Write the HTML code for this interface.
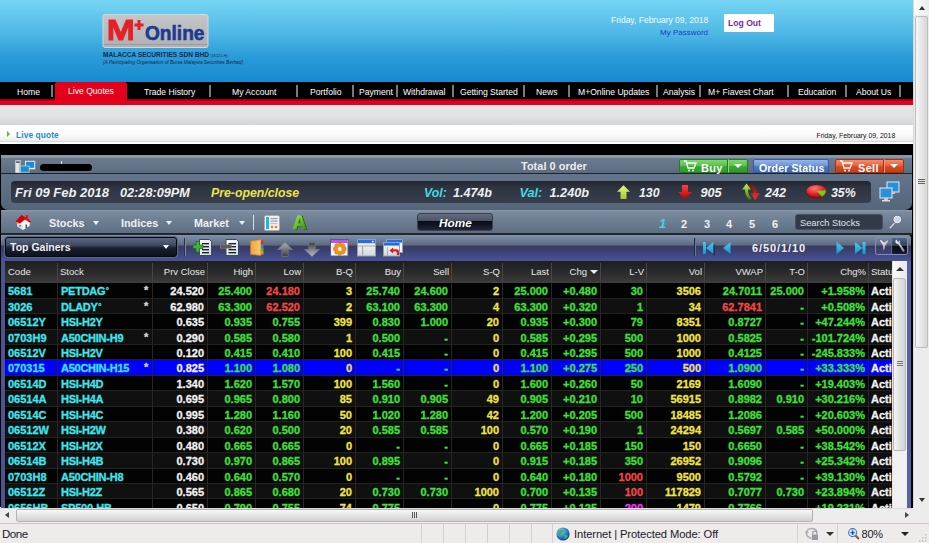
<!DOCTYPE html>
<html><head><meta charset="utf-8">
<style>
*{margin:0;padding:0;box-sizing:border-box}
html,body{width:929px;height:543px;overflow:hidden;background:#fff;font-family:"Liberation Sans",sans-serif}
.a{position:absolute}
.nw{white-space:nowrap}
#hdr{left:0;top:0;width:913px;height:82px;background:linear-gradient(#76d5f3 0%,#4fb8e6 40%,#2a9ad8 70%,#178bcf 100%)}
#nav{left:0;top:82px;width:913px;height:18px;background:#000}
#redline{left:0;top:99px;width:913px;height:6px;background:linear-gradient(#8a0014 0,#c00018 30%,#e8001e 40%,#e4001c 100%)}
.navt{top:82px;height:17px;line-height:20px;color:#fff;font-size:8.6px;white-space:nowrap}
.nsep{top:85px;width:2px;height:12px;background:#7a7a7a}
#grey{left:0;top:105px;width:913px;height:20px;background:linear-gradient(#e8f0f0 0,#e4e5e7 8%,#e2e3e5 50%,#d6d6d8 100%)}
#white{left:0;top:125px;width:913px;height:19px;background:linear-gradient(#fff 0,#fbfbfb 50%,#eeeeee 82%,#d4d4d4 84%,#d8d8d8 89%,#fff 92%,#fff 100%)}
.hd{top:261px;height:21px;line-height:22px;font-size:9.5px;color:#e8e8e8;white-space:nowrap}
.td{height:15px;line-height:16px;font-size:11px;font-weight:bold;white-space:nowrap;-webkit-text-stroke:0.3px currentColor}
.ib{top:185px;font-size:13px;font-weight:bold;font-style:italic;color:#f0f0f0;line-height:16px}
.tb{top:216px;font-size:10.8px;font-weight:bold;color:#eef0f4;line-height:15px}
.tri{top:221px;border-left:3.5px solid transparent;border-right:3.5px solid transparent;border-top:4px solid #eef0f4}
.pg{top:215.5px;font-size:11px;font-weight:bold;color:#f0f0f0;line-height:16px}
.sep2{top:524px;width:1px;height:19px;background:#d4d0d0}
#blk{left:0;top:144px;width:913px;height:363px;background:#000}
</style></head><body>
<div id="hdr" class="a"></div>
<!-- logo -->
<svg class="a" style="left:95px;top:8px" width="160" height="64" viewBox="0 0 160 64">
<defs><linearGradient id="lg" x1="0" y1="0" x2="0" y2="1"><stop offset="0" stop-color="#c4c6c9"/><stop offset="1" stop-color="#aeb0b3"/></linearGradient></defs>
<rect x="8" y="6.5" width="105" height="33" rx="2" fill="url(#lg)" stroke="#d4d6d8" stroke-width="1"/>
<path d="M8.5 36.5H112.5" stroke="#9a9c9f" stroke-width="1"/>
<path d="M13.5 11.5H20.5L25.8 24L31 11.5H38V32.5H33.2V19.5L28 32.5H23.5L18.3 19.5V32.5H13.5Z" fill="#e42128"/>
<path d="M39.5 15.5H42.5V12H45.5V15.5H48.5V18.5H45.5V22H42.5V18.5H39.5Z" fill="#e42128"/>
<text x="50" y="31.8" font-family="Liberation Sans" font-weight="bold" font-size="20.5" fill="#1d3a8f" textLength="59.5" lengthAdjust="spacingAndGlyphs" stroke="#1d3a8f" stroke-width="0.6">Online</text>
<text x="8" y="49" font-family="Liberation Sans" font-weight="bold" font-size="7.6" fill="#14284a" textLength="106" lengthAdjust="spacingAndGlyphs">MALACCA SECURITIES SDN BHD</text>
<text x="115.5" y="48.5" font-family="Liberation Sans" font-size="3.6" fill="#14284a" textLength="17" lengthAdjust="spacingAndGlyphs">(16121-H)</text>
<text x="8" y="56" font-family="Liberation Sans" font-style="italic" font-size="6" fill="#14284a" textLength="140" lengthAdjust="spacingAndGlyphs">(A Participating Organisation of Bursa Malaysia Securities Berhad)</text>
</svg>
<!-- header right -->
<div class="a nw" style="left:611px;top:15px;font-size:8.5px;color:#f4f8fc;line-height:10px">Friday, February 09, 2018</div>
<div class="a nw" style="left:660px;top:28px;font-size:8px;color:#1a3fc0;line-height:10px">My Password</div>
<div class="a" style="left:724px;top:14px;width:50px;height:18px;background:#fff"></div>
<div class="a nw" style="left:728px;top:17px;font-size:8.6px;font-weight:bold;color:#7b1fa2;line-height:12px">Log Out</div>

<div id="nav" class="a"></div>
<div id="redline" class="a"></div>
<div class="a" style="left:55px;top:82px;width:72px;height:19px;background:#e2001a;border-radius:2px 2px 0 0"></div>
<div class="a navt" style="left:17px">Home</div>
<div class="a nsep" style="left:51px"></div>
<div class="a navt" style="left:68px;top:81px">Live Quotes</div>
<div class="a navt" style="left:144px">Trade History</div>
<div class="a nsep" style="left:209px"></div>
<div class="a navt" style="left:232px">My Account</div>
<div class="a nsep" style="left:296px"></div>
<div class="a navt" style="left:310px">Portfolio</div>
<div class="a nsep" style="left:352px"></div>
<div class="a navt" style="left:359px">Payment</div>
<div class="a nsep" style="left:396px"></div>
<div class="a navt" style="left:403px">Withdrawal</div>
<div class="a nsep" style="left:452px"></div>
<div class="a navt" style="left:460px">Getting Started</div>
<div class="a nsep" style="left:523px"></div>
<div class="a navt" style="left:536px">News</div>
<div class="a nsep" style="left:568px"></div>
<div class="a navt" style="left:578px">M+Online Updates</div>
<div class="a nsep" style="left:656px"></div>
<div class="a navt" style="left:663px">Analysis</div>
<div class="a nsep" style="left:699px"></div>
<div class="a navt" style="left:708px">M+ Fiavest Chart</div>
<div class="a nsep" style="left:787px"></div>
<div class="a navt" style="left:798px">Education</div>
<div class="a nsep" style="left:845px"></div>
<div class="a navt" style="left:856px">About Us</div>
<div class="a nsep" style="left:899px"></div>

<div id="grey" class="a"></div>
<div id="white" class="a"></div>
<div class="a" style="left:7px;top:131px;width:0;height:0;border-left:3.5px solid #5cb82c;border-top:3px solid transparent;border-bottom:3px solid transparent"></div>
<div class="a nw" style="left:16px;top:130px;font-size:8.4px;font-weight:bold;color:#2a8ac8;line-height:10px;letter-spacing:0.1px">Live quote</div>
<div class="a nw" style="left:816.5px;top:131px;font-size:6.9px;color:#111;line-height:10px">Friday, February 09, 2018</div>

<div id="blk" class="a"></div>
<!-- APP -->
<div id="app"></div>
<!-- panel -->
<div class="a" style="left:1px;top:155px;width:911px;height:18px;background:linear-gradient(#8a9aae 0,#8696aa 15%,#6c7a8e 18%,#66758a 50%,#5c6b80 100%)"></div>
<div class="a" style="left:1px;top:173px;width:911px;height:1px;background:#1e242c"></div>
<div class="a" style="left:1px;top:174px;width:911px;height:36px;background:linear-gradient(#64748a,#55657a);border-radius:0 0 7px 7px"></div>
<div class="a" style="left:11px;top:181px;width:860px;height:22px;background:linear-gradient(#20252f 0,#2e3440 30%,#383f4d 100%);border-radius:4px"></div>
<div class="a" style="left:1px;top:210px;width:911px;height:24px;background:linear-gradient(#8a99ab 0,#7a8a9d 10%,#6a7a8e 60%,#5d6c80 100%)"></div>
<div class="a" style="left:1px;top:233px;width:911px;height:2px;background:#23262c"></div>
<div class="a" style="left:1px;top:235px;width:910px;height:26px;background:linear-gradient(#7e92aa 0,#6e7e96 20%,#5c687c 40%,#383a5e 41%,#3c4070 60%,#46549a 100%);border-radius:0 3px 0 0"></div>
<!-- table area -->
<div class="a" style="left:1px;top:261px;width:911px;height:247px;background:#4a5590"></div>
<div class="a" style="left:5px;top:261px;width:887px;height:247px;background:#000"></div>
<div class="a" style="left:907px;top:261px;width:4px;height:247px;background:#5262a4"></div>
<div class="a" style="left:911px;top:235px;width:2px;height:273px;background:#000"></div>


<!--PANEL-->
<!-- row A content -->
<svg class="a" style="left:15px;top:160px" width="21" height="13" viewBox="0 0 21 13"><rect x="0.3" y="0.3" width="5.5" height="12.5" fill="#e4e4e4"/><rect x="4" y="0.3" width="2" height="12.5" fill="#b8b8b8"/><rect x="1" y="1.5" width="3.5" height="1.2" fill="#333"/><rect x="10" y="0.8" width="10.2" height="8.5" fill="#e8f0f4"/><rect x="11" y="1.8" width="8.2" height="6" fill="#1f8ad4"/><rect x="5" y="5.6" width="9.5" height="7" fill="#a8d8f0"/><rect x="5.8" y="6.4" width="8" height="5.4" fill="#1f8ad4"/></svg>


<div class="a" style="left:40px;top:164px;width:52px;height:7px;background:#000;border-radius:3.5px"></div>
<div class="a" style="left:61px;top:161px;width:1px;height:3px;background:#e8e8e8"></div>
<div class="a nw" style="left:521px;top:159px;font-size:11px;font-weight:bold;color:#ececec;line-height:14px">Total 0 order</div>
<!-- buy -->
<div class="a" style="left:679px;top:159px;width:49px;height:14px;background:linear-gradient(#7cd86c 0,#5cc450 45%,#3aa832 55%,#2e9a28 100%);border:1px solid #2a7a22;border-radius:2px 0 0 0"></div>
<div class="a" style="left:728px;top:159px;width:20px;height:14px;background:linear-gradient(#7cd86c 0,#5cc450 45%,#3aa832 55%,#2e9a28 100%);border:1px solid #2a7a22;border-left:1px solid #8ad87a;border-radius:0 2px 0 0"></div>
<div class="a nw" style="left:701px;top:160px;font-size:11px;font-weight:bold;color:#fff;line-height:16px;letter-spacing:0.3px">Buy</div>
<div class="a" style="left:734px;top:164px;border-left:4px solid transparent;border-right:4px solid transparent;border-top:4px solid #fff"></div>
<!-- order status -->
<div class="a" style="left:753px;top:159px;width:76px;height:14px;background:linear-gradient(#94b4ea 0,#7096d8 45%,#5078c4 55%,#3e66b2 100%);border:1px solid #3a5aa0;border-radius:2px 2px 0 0"></div>
<div class="a nw" style="left:759px;top:160px;font-size:10.6px;font-weight:bold;color:#fff;line-height:16px;letter-spacing:0.1px">Order Status</div>
<!-- sell -->
<div class="a" style="left:835px;top:159px;width:49px;height:14px;background:linear-gradient(#f48c6c 0,#e8643e 45%,#d84a22 55%,#c83c18 100%);border:1px solid #a83010;border-radius:2px 0 0 0"></div>
<div class="a" style="left:884px;top:159px;width:20px;height:14px;background:linear-gradient(#f48c6c 0,#e8643e 45%,#d84a22 55%,#c83c18 100%);border:1px solid #a83010;border-left:1px solid #f8a080;border-radius:0 2px 0 0"></div>
<div class="a nw" style="left:858px;top:160px;font-size:11px;font-weight:bold;color:#fff;line-height:16px;letter-spacing:0.3px">Sell</div>
<div class="a" style="left:890px;top:164px;border-left:4px solid transparent;border-right:4px solid transparent;border-top:4px solid #fff"></div>
<!-- cart icons -->
<svg class="a" style="left:683px;top:160px" width="14" height="12" viewBox="0 0 14 12"><path d="M1 1h2l2 7h6l2-5H4" fill="none" stroke="#fff" stroke-width="1.3"/><circle cx="6" cy="10.5" r="1" fill="#fff"/><circle cx="10" cy="10.5" r="1" fill="#fff"/></svg>
<svg class="a" style="left:839px;top:160px" width="14" height="12" viewBox="0 0 14 12"><path d="M1 1h2l2 7h6l2-5H4" fill="none" stroke="#fff" stroke-width="1.3"/><circle cx="6" cy="10.5" r="1" fill="#fff"/><circle cx="10" cy="10.5" r="1" fill="#fff"/></svg>

<!-- info bar content -->
<div class="a nw ib" style="left:15px">Fri 09 Feb 2018</div>
<div class="a nw ib" style="left:120px;font-size:12.7px">02:28:09PM</div>
<div class="a nw ib" style="left:211px;color:#ece44a;font-size:12.3px">Pre-open/close</div>
<div class="a nw ib" style="left:424px;color:#40dce8;font-size:12.3px">Vol:</div>
<div class="a nw ib" style="left:453px;font-size:12.5px">1.474b</div>
<div class="a nw ib" style="left:519.5px;color:#40dce8;font-size:12.7px">Val:</div>
<div class="a nw ib" style="left:549.5px;font-size:12.7px">1.240b</div>
<svg class="a" style="left:617px;top:185px" width="14" height="15" viewBox="0 0 14 15"><defs><linearGradient id="yg" x1="0" y1="0" x2="0" y2="1"><stop offset="0" stop-color="#e8f890"/><stop offset="1" stop-color="#a8c820"/></linearGradient></defs><path d="M6.5 0.3L13 6.8H9.5V14H3.5V6.8H0Z" fill="url(#yg)"/></svg>
<div class="a nw ib" style="left:639px;font-size:12.3px">130</div>
<svg class="a" style="left:678px;top:185px" width="15" height="15" viewBox="0 0 15 15"><defs><linearGradient id="rg2" x1="0" y1="0" x2="0" y2="1"><stop offset="0" stop-color="#ff4040"/><stop offset="1" stop-color="#b80000"/></linearGradient></defs><path d="M4 0H10V7H14L7 14L0 7H4Z" fill="url(#rg2)"/></svg>
<div class="a nw ib" style="left:700.5px;font-size:12.7px">905</div>
<svg class="a" style="left:741px;top:183px" width="21" height="18" viewBox="0 0 21 18"><defs><linearGradient id="grn" x1="0" y1="0" x2="0" y2="1"><stop offset="0" stop-color="#c8f050"/><stop offset="1" stop-color="#2a7a10"/></linearGradient><linearGradient id="rd" x1="0" y1="0" x2="0" y2="1"><stop offset="0" stop-color="#801010"/><stop offset="1" stop-color="#ff3030"/></linearGradient></defs><path d="M8.5 17Q3.5 12.5 4 6.5H1L5.5 0.5L10 6.5H7Q7 11.5 10.5 15.5Z" fill="url(#grn)"/><path d="M8.5 1Q15.5 2.5 15.5 10H19L14 17L9.5 10H12.5Q12.5 5 8 3Z" fill="url(#rd)"/></svg>
<div class="a nw ib" style="left:765px;font-size:12.7px">242</div>
<svg class="a" style="left:806px;top:184px" width="21" height="15" viewBox="0 0 21 15"><defs><radialGradient id="pie" cx=".4" cy=".3" r=".8"><stop offset="0" stop-color="#ff7a7a"/><stop offset=".6" stop-color="#e02020"/><stop offset="1" stop-color="#a01010"/></radialGradient></defs><ellipse cx="10.5" cy="8.2" rx="10" ry="6.3" fill="#8a0c0c"/><ellipse cx="10.5" cy="7" rx="10" ry="6" fill="url(#pie)"/><path d="M10.5 7L19.8 6.2Q20 10.5 16 12.2Z" fill="#70d020"/><path d="M10.5 8.2L16 13.2Q19.5 11.5 20.3 8.5L19.8 7Q19 11 16 12.2Z" fill="#3a8a10"/></svg>
<div class="a nw ib" style="left:831px;font-size:12.3px">35%</div>
<svg class="a" style="left:879px;top:181px" width="21" height="22" viewBox="0 0 21 22"><rect x="8" y="1" width="12" height="10" fill="#2a90d8" stroke="#d8ecf8" stroke-width="1"/><rect x="1" y="7" width="12" height="10" fill="#2a90d8" stroke="#d8ecf8" stroke-width="1"/><rect x="5" y="17" width="4" height="2" fill="#ccc"/><rect x="3" y="19" width="8" height="1.5" fill="#ddd"/><rect x="13" y="11" width="3" height="2" fill="#ccc"/></svg>

<!-- toolbar C -->
<svg class="a" style="left:15px;top:214px" width="17" height="17" viewBox="0 0 17 17"><path d="M2 8.5L2.5 12.5L8 16L14.5 12L15 8.5L10 5Z" fill="#f4f6f8"/><path d="M2 9L2.5 12.5L8 16L8 11Z" fill="#d8dde4"/><path d="M10.5 10.5h1.6v3.5h-1.6z" fill="#4a5868"/><path d="M4 11h2v1.5h-2z" fill="#7a8aa0"/><path d="M0.5 7.5L6.5 1L11 3.5V1h1.8v3.6L16 7.5L15 8.7L10 5.5L5 9.5Z" fill="#e80808"/><path d="M0.5 7.5L6.5 1L10 4.5L5 9.5Z" fill="#b00000" opacity=".55"/><path d="M0.5 7.5L5 9.5L6 10L2 9.5Z" fill="#f08080"/></svg>
<div class="a nw tb" style="left:49px">Stocks</div>
<div class="a tri" style="left:93px"></div>
<div class="a nw tb" style="left:121px">Indices</div>
<div class="a tri" style="left:166px"></div>
<div class="a nw tb" style="left:194px">Market</div>
<div class="a tri" style="left:238.5px"></div>
<div class="a" style="left:253px;top:215px;width:1px;height:15px;background:#d8dde4"></div>
<svg class="a" style="left:264px;top:215px" width="16" height="16" viewBox="0 0 16 16"><rect x=".5" y=".5" width="15" height="15" rx="1.5" fill="#f0f0f0" stroke="#b0a8a8"/><rect x="2" y="2" width="3" height="12" fill="#18b8e0"/><rect x="6.5" y="3" width="7" height="1.2" fill="#9a9aa8"/><rect x="6.5" y="5.5" width="7" height="1.2" fill="#9a9aa8"/><rect x="6.5" y="8" width="7" height="1.2" fill="#b8c0d8"/><circle cx="8" cy="12" r="1.3" fill="#f08010"/><circle cx="12" cy="12" r="1.3" fill="#f08010"/></svg>
<svg class="a" style="left:292px;top:215px" width="16" height="16" viewBox="0 0 16 16"><defs><linearGradient id="ga" x1="0" y1="0" x2="1" y2="1"><stop offset="0" stop-color="#a8e860"/><stop offset=".6" stop-color="#58b820"/><stop offset="1" stop-color="#3a8a10"/></linearGradient></defs><path d="M1.5 15L6.5 0.5H10.5L15.5 15H12L11 11.5H6.5L5.5 15Z M7.2 8.6H10.3L8.8 3.8Z" fill="#2a6008" fill-rule="evenodd"/><path d="M0.5 14.5L5.5 0.3H9.5L14.5 14.5H11L10 11H5.5L4.5 14.5Z M6.2 8.2H9.3L7.8 3.4Z" fill="url(#ga)" fill-rule="evenodd"/></svg>
<div class="a" style="left:417px;top:213px;width:76px;height:18px;background:linear-gradient(#646e82 0,#4a5266 44%,#0a0c14 46%,#141828 75%,#20263a 100%);border-radius:3px;border:1px solid #3a4050"></div>
<div class="a nw" style="left:439px;top:213.5px;font-size:11.8px;font-weight:bold;font-style:italic;color:#fff;line-height:18px">Home</div>
<div class="a nw pg" style="left:659px;color:#40d0e8;font-style:italic;font-size:13px">1</div>
<div class="a nw pg" style="left:681px">2</div>
<div class="a nw pg" style="left:704px">3</div>
<div class="a nw pg" style="left:726px">4</div>
<div class="a nw pg" style="left:749px">5</div>
<div class="a nw pg" style="left:772px">6</div>
<div class="a" style="left:795px;top:214px;width:88px;height:16px;background:#323a48;border-radius:3px;border:1px solid #465060"></div>
<div class="a nw" style="left:800px;top:216px;font-size:9.3px;color:#e0e4e8;line-height:15px">Search Stocks</div>
<svg class="a" style="left:888px;top:214px" width="15" height="16" viewBox="0 0 15 16"><path d="M6.8 8.8L1.8 14.3" stroke="#5a6478" stroke-width="2.4"/><path d="M6.8 8.8L1.8 14.3" stroke="#d8dce4" stroke-width="1.4"/><circle cx="9.3" cy="5.5" r="4.2" fill="#c8d8ea" stroke="#586478" stroke-width="1"/><circle cx="9.3" cy="5.5" r="3.4" fill="none" stroke="#eef2f8" stroke-width=".8"/></svg>

<!-- toolbar D -->
<div class="a" style="left:5px;top:237px;width:172px;height:20px;background:linear-gradient(#5a6880 0,#3e4a62 40%,#1a2030 55%,#0e121e 100%);border:1px solid #06080e;border-radius:3px;box-shadow:0 0 0 1px #5a6888"></div>
<div class="a nw" style="left:10px;top:239px;font-size:10.5px;font-weight:bold;color:#f0f0f0;line-height:16px">Top Gainers</div>
<div class="a" style="left:163px;top:245px;border-left:3.5px solid transparent;border-right:3.5px solid transparent;border-top:4px solid #fff"></div>
<div class="a" style="left:184px;top:238px;width:1px;height:18px;background:#2a3048"></div>
<div class="a" style="left:185px;top:238px;width:1px;height:18px;background:#7a86a0"></div>
<svg class="a" style="left:193px;top:239px" width="20" height="17" viewBox="0 0 20 17"><defs><linearGradient id="dg" x1="0" y1="0" x2="1" y2="1"><stop offset="0" stop-color="#ffffff"/><stop offset="1" stop-color="#c8dcf0"/></linearGradient></defs><path d="M6.5 0.5H16.5L18.5 2.5V16.5H6.5Z" fill="url(#dg)" stroke="#404858" stroke-width="1"/><rect x="9" y="4" width="7" height="1.4" fill="#222"/><rect x="9" y="7" width="7" height="1.4" fill="#222"/><rect x="9" y="10" width="7" height="1.4" fill="#222"/><rect x="9" y="13" width="7" height="1.4" fill="#222"/><path d="M3 2.5h3.5v3.5h3.5v3.5h-3.5v3.5h-3.5v-3.5h-3v-3.5h3z" fill="#3cb43c" stroke="#1e6e1e" stroke-width=".8"/></svg>
<svg class="a" style="left:220px;top:239px" width="20" height="17" viewBox="0 0 20 17"><path d="M6 0.5H16.5L18.5 2.5V16.5H6Z" fill="url(#dg)" stroke="#404858" stroke-width="1"/><rect x="8.5" y="4" width="7.5" height="1.4" fill="#222"/><rect x="8.5" y="7" width="7.5" height="1.4" fill="#222"/><rect x="8.5" y="10" width="7.5" height="1.4" fill="#222"/><rect x="8.5" y="13" width="7.5" height="1.4" fill="#222"/><rect x="0.5" y="5.8" width="11" height="3.4" fill="#5a5a5a" stroke="#888" stroke-width=".6"/></svg>
<svg class="a" style="left:250px;top:239px" width="15" height="17" viewBox="0 0 15 17"><defs><linearGradient id="bk" x1="0" y1="0" x2="1" y2="0"><stop offset="0" stop-color="#f0a040"/><stop offset="1" stop-color="#fcc878"/></linearGradient></defs><path d="M0.5 2L11 0.5V16.5L0.5 15.5Z" fill="url(#bk)" stroke="#c87818" stroke-width=".8"/><rect x="11" y="1.5" width="2.5" height="3.5" fill="#e02828"/><rect x="11" y="5" width="2.5" height="3.5" fill="#2a8ae0"/><rect x="11" y="8.5" width="2.5" height="3.5" fill="#40b840"/><rect x="11" y="12" width="2.5" height="3.5" fill="#f08a20"/></svg>
<svg class="a" style="left:277px;top:242px" width="16" height="15" viewBox="0 0 16 15"><defs><linearGradient id="ag" x1="0" y1="0" x2="0" y2="1"><stop offset="0" stop-color="#b0b4b8"/><stop offset="1" stop-color="#3a3c40"/></linearGradient><linearGradient id="ag2" x1="0" y1="0" x2="0" y2="1"><stop offset="0" stop-color="#3a3c40"/><stop offset="1" stop-color="#c0c4c8"/></linearGradient></defs><path d="M8 0.5L15.5 7.5H11.2V14.5H4.8V7.5H0.5Z" fill="url(#ag)" stroke="#7a8090" stroke-width=".6"/></svg>
<svg class="a" style="left:304px;top:242px" width="16" height="15" viewBox="0 0 16 15"><path d="M4.8 0.5H11.2V7.5H15.5L8 14.5L0.5 7.5H4.8Z" fill="url(#ag2)" stroke="#7a8090" stroke-width=".6"/></svg>
<svg class="a" style="left:330px;top:239px" width="19" height="18" viewBox="0 0 19 18"><rect x=".5" y=".5" width="17.5" height="16.5" fill="#f4f4f8" stroke="#5a5a80"/><rect x="1" y="1" width="16.5" height="3" fill="#c050e8"/><path d="M1 8h16.5M1 12h16.5M6 4v13M12 4v13" stroke="#c8d8e8" stroke-width=".6"/><g transform="translate(9.8 10)"><path d="M-1.3-6.3h2.6l.4 2 1.8-1.1 1.8 1.8-1.1 1.8 2 .4v2.6l-2 .4 1.1 1.8-1.8 1.8-1.8-1.1-.4 2h-2.6l-.4-2-1.8 1.1-1.8-1.8 1.1-1.8-2-.4v-2.6l2-.4-1.1-1.8 1.8-1.8 1.8 1.1z" fill="#f09418" stroke="#b86008" stroke-width=".5"/><circle r="1.9" fill="#f4f4f8"/></g></svg>
<svg class="a" style="left:357px;top:239px" width="19" height="18" viewBox="0 0 19 18"><defs><linearGradient id="wb" x1="0" y1="0" x2="0" y2="1"><stop offset="0" stop-color="#fafafa"/><stop offset="1" stop-color="#d8d8d8"/></linearGradient></defs><rect x=".5" y=".5" width="18" height="16.5" fill="url(#wb)" stroke="#8aa0c0"/><rect x="1" y="1" width="17" height="3.2" fill="#2a6ae0"/><rect x="15" y="1.8" width="1.5" height="1.5" fill="#fff"/><rect x="1" y="6.5" width="17" height="1" fill="#a8a8a8"/><rect x="5" y="7" width="1.2" height="10" fill="#a8a8a8"/></svg>
<svg class="a" style="left:383px;top:239px" width="20" height="18" viewBox="0 0 20 18"><rect x="3.5" y=".5" width="16" height="13" fill="#f4f4f4" stroke="#8aa0c0"/><rect x="4" y="1" width="15" height="2.6" fill="#2a6ae0"/><rect x=".5" y="3.5" width="16" height="13.5" fill="url(#wb)" stroke="#8aa0c0"/><rect x="1" y="4" width="15" height="2.6" fill="#2a6ae0"/><rect x="4" y="8" width="1" height="9" fill="#b0b0b0"/><path d="M6.5 11.5L10 8.5V10.3H13.5Q16 10.3 16 13V16H13.8V13Q13.8 12.6 13.3 12.6H10V14.5Z" fill="#e01818"/></svg>
<div class="a" style="left:694px;top:238px;width:1px;height:18px;background:#252a40"></div>
<div class="a" style="left:695px;top:238px;width:1px;height:18px;background:#6a7490"></div>
<svg class="a" style="left:703px;top:242px" width="13" height="14" viewBox="0 0 13 14"><defs><linearGradient id="cy" x1="0" y1="0" x2="0" y2="1"><stop offset="0" stop-color="#48c8ee"/><stop offset="1" stop-color="#1898c8"/></linearGradient></defs><path d="M4 7L11 1V13Z" fill="#1a2040" opacity=".6" transform="translate(1 1)"/><rect x="0" y="0" width="3" height="12" fill="url(#cy)"/><path d="M3 6L10.3 0V12Z" fill="url(#cy)"/></svg>
<svg class="a" style="left:723px;top:242px" width="9" height="14" viewBox="0 0 9 14"><path d="M0 6L7.5 0V12Z" fill="url(#cy)"/></svg>
<div class="a nw" style="left:752px;top:240px;font-size:11px;font-weight:bold;color:#f0f0f0;line-height:16px;letter-spacing:0.9px">6/50/1/10</div>
<svg class="a" style="left:836px;top:242px" width="9" height="14" viewBox="0 0 9 14"><path d="M8 6L0.5 0V12Z" fill="url(#cy)"/></svg>
<svg class="a" style="left:855px;top:242px" width="12" height="14" viewBox="0 0 12 14"><path d="M7.5 6L0 0V12Z" fill="url(#cy)"/><rect x="7.5" y="0" width="3" height="12" fill="url(#cy)"/></svg>
<svg class="a" style="left:875px;top:237px" width="33" height="18" viewBox="0 0 33 18"><defs><linearGradient id="wr" x1="0" y1="0" x2="0" y2="1"><stop offset="0" stop-color="#4e6888"/><stop offset=".48" stop-color="#30405a"/><stop offset=".5" stop-color="#06080e"/><stop offset="1" stop-color="#161c34"/></linearGradient><linearGradient id="pn" x1="0" y1="0" x2="1" y2="1"><stop offset="0" stop-color="#ffffff"/><stop offset="1" stop-color="#909090"/></linearGradient></defs><rect x="17" y="1" width="15" height="16" fill="url(#wr)"/><rect x=".5" y=".5" width="32" height="17" rx="2" fill="none" stroke="#8090b0" stroke-width="1"/><path d="M16.6 1v16" stroke="#6a7898" stroke-width=".8"/><path d="M5 3.5Q6 2.5 7 4L9 5.5L12.5 3.3Q13.5 3.6 12.8 5L10 9L9.5 12L8.8 13.5L8.3 12L8 8.5Z" fill="url(#pn)"/><path d="M21.5 2.5Q20 3.5 20.5 5.5Q21.5 7 23.2 7L27.5 14Q28.5 15.3 29.3 14.5Q30 13.7 29 12.5L24.6 6Q25.5 4.5 24.5 2.8L24 4.8L22.5 4.5Z" fill="url(#pn)"/></svg>
<!--/PANEL-->
<!--TABLE--><div class="a" style="left:0;top:0;width:892px;height:508px;overflow:hidden"><div class="a" style="left:5px;top:261px;width:887px;height:22px;background:linear-gradient(#1e1e1e,#2a2a2a 50%,#383838 90%,#404040)"></div>
<div class="a" style="left:57px;top:263px;width:1px;height:18px;background:#474747"></div>
<div class="a" style="left:152px;top:263px;width:1px;height:18px;background:#474747"></div>
<div class="a" style="left:207px;top:263px;width:1px;height:18px;background:#474747"></div>
<div class="a" style="left:255px;top:263px;width:1px;height:18px;background:#474747"></div>
<div class="a" style="left:303px;top:263px;width:1px;height:18px;background:#474747"></div>
<div class="a" style="left:355px;top:263px;width:1px;height:18px;background:#474747"></div>
<div class="a" style="left:403px;top:263px;width:1px;height:18px;background:#474747"></div>
<div class="a" style="left:451px;top:263px;width:1px;height:18px;background:#474747"></div>
<div class="a" style="left:502px;top:263px;width:1px;height:18px;background:#474747"></div>
<div class="a" style="left:551px;top:263px;width:1px;height:18px;background:#474747"></div>
<div class="a" style="left:600px;top:263px;width:1px;height:18px;background:#474747"></div>
<div class="a" style="left:646px;top:263px;width:1px;height:18px;background:#474747"></div>
<div class="a" style="left:704px;top:263px;width:1px;height:18px;background:#474747"></div>
<div class="a" style="left:765px;top:263px;width:1px;height:18px;background:#474747"></div>
<div class="a" style="left:807px;top:263px;width:1px;height:18px;background:#474747"></div>
<div class="a" style="left:868px;top:263px;width:1px;height:18px;background:#474747"></div>
<div class="a hd" style="left:8px">Code</div>
<div class="a hd" style="left:60px">Stock</div>
<div class="a hd" style="right:687px">Prv Close</div>
<div class="a hd" style="right:639px">High</div>
<div class="a hd" style="right:591px">Low</div>
<div class="a hd" style="right:539px">B-Q</div>
<div class="a hd" style="right:491px">Buy</div>
<div class="a hd" style="right:443px">Sell</div>
<div class="a hd" style="right:392px">S-Q</div>
<div class="a hd" style="right:343px">Last</div>
<div class="a hd" style="right:294px">Chg<span style="display:inline-block;width:0;height:0;border-left:4px solid transparent;border-right:4px solid transparent;border-top:4px solid #eee;margin-left:3px;vertical-align:1px"></span></div>
<div class="a hd" style="right:248px">L-V</div>
<div class="a hd" style="right:190px">Vol</div>
<div class="a hd" style="right:129px">VWAP</div>
<div class="a hd" style="right:87px">T-O</div>
<div class="a hd" style="right:26px">Chg%</div>
<div class="a hd" style="left:871px">Status</div>
<div class="a" style="left:5px;top:283.20px;width:887px;height:15.45px;background:#030303;border-bottom:1px solid #222"></div>
<div class="a" style="left:5px;top:298.65px;width:887px;height:15.45px;background:#101010;border-bottom:1px solid #222"></div>
<div class="a" style="left:5px;top:314.10px;width:887px;height:15.45px;background:#030303;border-bottom:1px solid #222"></div>
<div class="a" style="left:5px;top:329.55px;width:887px;height:15.45px;background:#101010;border-bottom:1px solid #222"></div>
<div class="a" style="left:5px;top:345.00px;width:887px;height:15.45px;background:#030303;border-bottom:1px solid #222"></div>
<div class="a" style="left:5px;top:360.45px;width:887px;height:15.45px;background:#0000ff;border-bottom:1px solid #222"></div>
<div class="a" style="left:5px;top:375.90px;width:887px;height:15.45px;background:#030303;border-bottom:1px solid #222"></div>
<div class="a" style="left:5px;top:391.35px;width:887px;height:15.45px;background:#101010;border-bottom:1px solid #222"></div>
<div class="a" style="left:5px;top:406.80px;width:887px;height:15.45px;background:#030303;border-bottom:1px solid #222"></div>
<div class="a" style="left:5px;top:422.25px;width:887px;height:15.45px;background:#101010;border-bottom:1px solid #222"></div>
<div class="a" style="left:5px;top:437.70px;width:887px;height:15.45px;background:#030303;border-bottom:1px solid #222"></div>
<div class="a" style="left:5px;top:453.15px;width:887px;height:15.45px;background:#101010;border-bottom:1px solid #222"></div>
<div class="a" style="left:5px;top:468.60px;width:887px;height:15.45px;background:#030303;border-bottom:1px solid #222"></div>
<div class="a" style="left:5px;top:484.05px;width:887px;height:15.45px;background:#101010;border-bottom:1px solid #222"></div>
<div class="a" style="left:5px;top:499.50px;width:887px;height:15.45px;background:#030303;border-bottom:1px solid #222"></div>
<div class="a" style="left:57px;top:283px;width:1px;height:225px;background:#262626"></div>
<div class="a" style="left:152px;top:283px;width:1px;height:225px;background:#262626"></div>
<div class="a" style="left:207px;top:283px;width:1px;height:225px;background:#262626"></div>
<div class="a" style="left:255px;top:283px;width:1px;height:225px;background:#262626"></div>
<div class="a" style="left:303px;top:283px;width:1px;height:225px;background:#262626"></div>
<div class="a" style="left:355px;top:283px;width:1px;height:225px;background:#262626"></div>
<div class="a" style="left:403px;top:283px;width:1px;height:225px;background:#262626"></div>
<div class="a" style="left:451px;top:283px;width:1px;height:225px;background:#262626"></div>
<div class="a" style="left:502px;top:283px;width:1px;height:225px;background:#262626"></div>
<div class="a" style="left:551px;top:283px;width:1px;height:225px;background:#262626"></div>
<div class="a" style="left:600px;top:283px;width:1px;height:225px;background:#262626"></div>
<div class="a" style="left:646px;top:283px;width:1px;height:225px;background:#262626"></div>
<div class="a" style="left:704px;top:283px;width:1px;height:225px;background:#262626"></div>
<div class="a" style="left:765px;top:283px;width:1px;height:225px;background:#262626"></div>
<div class="a" style="left:807px;top:283px;width:1px;height:225px;background:#262626"></div>
<div class="a" style="left:868px;top:283px;width:1px;height:225px;background:#262626"></div>
<div class="a td" style="left:8px;top:283.20px;color:#3ee6ee">5681</div>
<div class="a td" style="left:61px;top:283.20px;color:#3ee6ee;letter-spacing:-0.25px">PETDAG<span style="font-size:8px;vertical-align:2px;margin-left:0.5px">°</span></div>
<div class="a td" style="right:688px;top:283.20px;color:#f2f2f2">24.520</div>
<div class="a td" style="right:640px;top:283.20px;color:#3fe03a">25.400</div>
<div class="a td" style="right:592px;top:283.20px;color:#f24848">24.180</div>
<div class="a td" style="right:540px;top:283.20px;color:#f0e448">3</div>
<div class="a td" style="right:492px;top:283.20px;color:#3fe03a">25.740</div>
<div class="a td" style="right:444px;top:283.20px;color:#3fe03a">24.600</div>
<div class="a td" style="right:393px;top:283.20px;color:#f0e448">2</div>
<div class="a td" style="right:344px;top:283.20px;color:#3fe03a">25.000</div>
<div class="a td" style="right:295px;top:283.20px;color:#3fe03a">+0.480</div>
<div class="a td" style="right:249px;top:283.20px;color:#3fe03a">30</div>
<div class="a td" style="right:191px;top:283.20px;color:#f0e448">3506</div>
<div class="a td" style="right:130px;top:283.20px;color:#3fe03a">24.7011</div>
<div class="a td" style="right:88px;top:283.20px;color:#3fe03a">25.000</div>
<div class="a td" style="right:27px;top:283.20px;color:#3fe03a">+1.958%</div>
<div class="a td" style="left:871px;top:283.20px;color:#f2f2f2">Acti</div>
<div class="a td" style="left:144px;top:282.20px;color:#d8d8d8">*</div>
<div class="a td" style="left:8px;top:298.65px;color:#3ee6ee">3026</div>
<div class="a td" style="left:61px;top:298.65px;color:#3ee6ee;letter-spacing:-0.25px">DLADY<span style="font-size:8px;vertical-align:2px;margin-left:0.5px">°</span></div>
<div class="a td" style="right:688px;top:298.65px;color:#f2f2f2">62.980</div>
<div class="a td" style="right:640px;top:298.65px;color:#3fe03a">63.300</div>
<div class="a td" style="right:592px;top:298.65px;color:#f24848">62.520</div>
<div class="a td" style="right:540px;top:298.65px;color:#f0e448">2</div>
<div class="a td" style="right:492px;top:298.65px;color:#3fe03a">63.100</div>
<div class="a td" style="right:444px;top:298.65px;color:#3fe03a">63.300</div>
<div class="a td" style="right:393px;top:298.65px;color:#f0e448">4</div>
<div class="a td" style="right:344px;top:298.65px;color:#3fe03a">63.300</div>
<div class="a td" style="right:295px;top:298.65px;color:#3fe03a">+0.320</div>
<div class="a td" style="right:249px;top:298.65px;color:#3fe03a">1</div>
<div class="a td" style="right:191px;top:298.65px;color:#f0e448">34</div>
<div class="a td" style="right:130px;top:298.65px;color:#f24848">62.7841</div>
<div class="a td" style="right:88px;top:298.65px;color:#3fe03a">-</div>
<div class="a td" style="right:27px;top:298.65px;color:#3fe03a">+0.508%</div>
<div class="a td" style="left:871px;top:298.65px;color:#f2f2f2">Acti</div>
<div class="a td" style="left:144px;top:297.65px;color:#d8d8d8">*</div>
<div class="a td" style="left:8px;top:314.10px;color:#3ee6ee">06512Y</div>
<div class="a td" style="left:61px;top:314.10px;color:#3ee6ee;letter-spacing:-0.25px">HSI-H2Y</div>
<div class="a td" style="right:688px;top:314.10px;color:#f2f2f2">0.635</div>
<div class="a td" style="right:640px;top:314.10px;color:#3fe03a">0.935</div>
<div class="a td" style="right:592px;top:314.10px;color:#3fe03a">0.755</div>
<div class="a td" style="right:540px;top:314.10px;color:#f0e448">399</div>
<div class="a td" style="right:492px;top:314.10px;color:#3fe03a">0.830</div>
<div class="a td" style="right:444px;top:314.10px;color:#3fe03a">1.000</div>
<div class="a td" style="right:393px;top:314.10px;color:#f0e448">20</div>
<div class="a td" style="right:344px;top:314.10px;color:#3fe03a">0.935</div>
<div class="a td" style="right:295px;top:314.10px;color:#3fe03a">+0.300</div>
<div class="a td" style="right:249px;top:314.10px;color:#3fe03a">79</div>
<div class="a td" style="right:191px;top:314.10px;color:#f0e448">8351</div>
<div class="a td" style="right:130px;top:314.10px;color:#3fe03a">0.8727</div>
<div class="a td" style="right:88px;top:314.10px;color:#3fe03a">-</div>
<div class="a td" style="right:27px;top:314.10px;color:#3fe03a">+47.244%</div>
<div class="a td" style="left:871px;top:314.10px;color:#f2f2f2">Acti</div>
<div class="a td" style="left:8px;top:329.55px;color:#3ee6ee">0703H9</div>
<div class="a td" style="left:61px;top:329.55px;color:#3ee6ee;letter-spacing:-0.25px">A50CHIN-H9</div>
<div class="a td" style="right:688px;top:329.55px;color:#f2f2f2">0.290</div>
<div class="a td" style="right:640px;top:329.55px;color:#3fe03a">0.585</div>
<div class="a td" style="right:592px;top:329.55px;color:#3fe03a">0.580</div>
<div class="a td" style="right:540px;top:329.55px;color:#f0e448">1</div>
<div class="a td" style="right:492px;top:329.55px;color:#3fe03a">0.500</div>
<div class="a td" style="right:444px;top:329.55px;color:#3fe03a">-</div>
<div class="a td" style="right:393px;top:329.55px;color:#f0e448">0</div>
<div class="a td" style="right:344px;top:329.55px;color:#3fe03a">0.585</div>
<div class="a td" style="right:295px;top:329.55px;color:#3fe03a">+0.295</div>
<div class="a td" style="right:249px;top:329.55px;color:#3fe03a">500</div>
<div class="a td" style="right:191px;top:329.55px;color:#f0e448">1000</div>
<div class="a td" style="right:130px;top:329.55px;color:#3fe03a">0.5825</div>
<div class="a td" style="right:88px;top:329.55px;color:#3fe03a">-</div>
<div class="a td" style="right:27px;top:329.55px;color:#3fe03a">-101.724%</div>
<div class="a td" style="left:871px;top:329.55px;color:#f2f2f2">Acti</div>
<div class="a td" style="left:144px;top:328.55px;color:#d8d8d8">*</div>
<div class="a td" style="left:8px;top:345.00px;color:#3ee6ee">06512V</div>
<div class="a td" style="left:61px;top:345.00px;color:#3ee6ee;letter-spacing:-0.25px">HSI-H2V</div>
<div class="a td" style="right:688px;top:345.00px;color:#f2f2f2">0.120</div>
<div class="a td" style="right:640px;top:345.00px;color:#3fe03a">0.415</div>
<div class="a td" style="right:592px;top:345.00px;color:#3fe03a">0.410</div>
<div class="a td" style="right:540px;top:345.00px;color:#f0e448">100</div>
<div class="a td" style="right:492px;top:345.00px;color:#3fe03a">0.415</div>
<div class="a td" style="right:444px;top:345.00px;color:#3fe03a">-</div>
<div class="a td" style="right:393px;top:345.00px;color:#f0e448">0</div>
<div class="a td" style="right:344px;top:345.00px;color:#3fe03a">0.415</div>
<div class="a td" style="right:295px;top:345.00px;color:#3fe03a">+0.295</div>
<div class="a td" style="right:249px;top:345.00px;color:#3fe03a">500</div>
<div class="a td" style="right:191px;top:345.00px;color:#f0e448">1000</div>
<div class="a td" style="right:130px;top:345.00px;color:#3fe03a">0.4125</div>
<div class="a td" style="right:88px;top:345.00px;color:#3fe03a">-</div>
<div class="a td" style="right:27px;top:345.00px;color:#3fe03a">-245.833%</div>
<div class="a td" style="left:871px;top:345.00px;color:#f2f2f2">Acti</div>
<div class="a td" style="left:8px;top:360.45px;color:#3ee6ee">070315</div>
<div class="a td" style="left:61px;top:360.45px;color:#3ee6ee;letter-spacing:-0.25px">A50CHIN-H15</div>
<div class="a td" style="right:688px;top:360.45px;color:#f2f2f2">0.825</div>
<div class="a td" style="right:640px;top:360.45px;color:#3fe03a">1.100</div>
<div class="a td" style="right:592px;top:360.45px;color:#3fe03a">1.080</div>
<div class="a td" style="right:540px;top:360.45px;color:#f0e448">0</div>
<div class="a td" style="right:492px;top:360.45px;color:#3fe03a">-</div>
<div class="a td" style="right:444px;top:360.45px;color:#3fe03a">-</div>
<div class="a td" style="right:393px;top:360.45px;color:#f0e448">0</div>
<div class="a td" style="right:344px;top:360.45px;color:#3fe03a">1.100</div>
<div class="a td" style="right:295px;top:360.45px;color:#3fe03a">+0.275</div>
<div class="a td" style="right:249px;top:360.45px;color:#3fe03a">250</div>
<div class="a td" style="right:191px;top:360.45px;color:#f0e448">500</div>
<div class="a td" style="right:130px;top:360.45px;color:#3fe03a">1.0900</div>
<div class="a td" style="right:88px;top:360.45px;color:#3fe03a">-</div>
<div class="a td" style="right:27px;top:360.45px;color:#3fe03a">+33.333%</div>
<div class="a td" style="left:871px;top:360.45px;color:#f2f2f2">Acti</div>
<div class="a td" style="left:144px;top:359.45px;color:#d8d8d8">*</div>
<div class="a td" style="left:8px;top:375.90px;color:#3ee6ee">06514D</div>
<div class="a td" style="left:61px;top:375.90px;color:#3ee6ee;letter-spacing:-0.25px">HSI-H4D</div>
<div class="a td" style="right:688px;top:375.90px;color:#f2f2f2">1.340</div>
<div class="a td" style="right:640px;top:375.90px;color:#3fe03a">1.620</div>
<div class="a td" style="right:592px;top:375.90px;color:#3fe03a">1.570</div>
<div class="a td" style="right:540px;top:375.90px;color:#f0e448">100</div>
<div class="a td" style="right:492px;top:375.90px;color:#3fe03a">1.560</div>
<div class="a td" style="right:444px;top:375.90px;color:#3fe03a">-</div>
<div class="a td" style="right:393px;top:375.90px;color:#f0e448">0</div>
<div class="a td" style="right:344px;top:375.90px;color:#3fe03a">1.600</div>
<div class="a td" style="right:295px;top:375.90px;color:#3fe03a">+0.260</div>
<div class="a td" style="right:249px;top:375.90px;color:#3fe03a">50</div>
<div class="a td" style="right:191px;top:375.90px;color:#f0e448">2169</div>
<div class="a td" style="right:130px;top:375.90px;color:#3fe03a">1.6090</div>
<div class="a td" style="right:88px;top:375.90px;color:#3fe03a">-</div>
<div class="a td" style="right:27px;top:375.90px;color:#3fe03a">+19.403%</div>
<div class="a td" style="left:871px;top:375.90px;color:#f2f2f2">Acti</div>
<div class="a td" style="left:8px;top:391.35px;color:#3ee6ee">06514A</div>
<div class="a td" style="left:61px;top:391.35px;color:#3ee6ee;letter-spacing:-0.25px">HSI-H4A</div>
<div class="a td" style="right:688px;top:391.35px;color:#f2f2f2">0.695</div>
<div class="a td" style="right:640px;top:391.35px;color:#3fe03a">0.965</div>
<div class="a td" style="right:592px;top:391.35px;color:#3fe03a">0.800</div>
<div class="a td" style="right:540px;top:391.35px;color:#f0e448">85</div>
<div class="a td" style="right:492px;top:391.35px;color:#3fe03a">0.910</div>
<div class="a td" style="right:444px;top:391.35px;color:#3fe03a">0.905</div>
<div class="a td" style="right:393px;top:391.35px;color:#f0e448">49</div>
<div class="a td" style="right:344px;top:391.35px;color:#3fe03a">0.905</div>
<div class="a td" style="right:295px;top:391.35px;color:#3fe03a">+0.210</div>
<div class="a td" style="right:249px;top:391.35px;color:#3fe03a">10</div>
<div class="a td" style="right:191px;top:391.35px;color:#f0e448">56915</div>
<div class="a td" style="right:130px;top:391.35px;color:#3fe03a">0.8982</div>
<div class="a td" style="right:88px;top:391.35px;color:#3fe03a">0.910</div>
<div class="a td" style="right:27px;top:391.35px;color:#3fe03a">+30.216%</div>
<div class="a td" style="left:871px;top:391.35px;color:#f2f2f2">Acti</div>
<div class="a td" style="left:8px;top:406.80px;color:#3ee6ee">06514C</div>
<div class="a td" style="left:61px;top:406.80px;color:#3ee6ee;letter-spacing:-0.25px">HSI-H4C</div>
<div class="a td" style="right:688px;top:406.80px;color:#f2f2f2">0.995</div>
<div class="a td" style="right:640px;top:406.80px;color:#3fe03a">1.280</div>
<div class="a td" style="right:592px;top:406.80px;color:#3fe03a">1.160</div>
<div class="a td" style="right:540px;top:406.80px;color:#f0e448">50</div>
<div class="a td" style="right:492px;top:406.80px;color:#3fe03a">1.020</div>
<div class="a td" style="right:444px;top:406.80px;color:#3fe03a">1.280</div>
<div class="a td" style="right:393px;top:406.80px;color:#f0e448">42</div>
<div class="a td" style="right:344px;top:406.80px;color:#3fe03a">1.200</div>
<div class="a td" style="right:295px;top:406.80px;color:#3fe03a">+0.205</div>
<div class="a td" style="right:249px;top:406.80px;color:#3fe03a">500</div>
<div class="a td" style="right:191px;top:406.80px;color:#f0e448">18485</div>
<div class="a td" style="right:130px;top:406.80px;color:#3fe03a">1.2086</div>
<div class="a td" style="right:88px;top:406.80px;color:#3fe03a">-</div>
<div class="a td" style="right:27px;top:406.80px;color:#3fe03a">+20.603%</div>
<div class="a td" style="left:871px;top:406.80px;color:#f2f2f2">Acti</div>
<div class="a td" style="left:8px;top:422.25px;color:#3ee6ee">06512W</div>
<div class="a td" style="left:61px;top:422.25px;color:#3ee6ee;letter-spacing:-0.25px">HSI-H2W</div>
<div class="a td" style="right:688px;top:422.25px;color:#f2f2f2">0.380</div>
<div class="a td" style="right:640px;top:422.25px;color:#3fe03a">0.620</div>
<div class="a td" style="right:592px;top:422.25px;color:#3fe03a">0.500</div>
<div class="a td" style="right:540px;top:422.25px;color:#f0e448">20</div>
<div class="a td" style="right:492px;top:422.25px;color:#3fe03a">0.585</div>
<div class="a td" style="right:444px;top:422.25px;color:#3fe03a">0.585</div>
<div class="a td" style="right:393px;top:422.25px;color:#f0e448">100</div>
<div class="a td" style="right:344px;top:422.25px;color:#3fe03a">0.570</div>
<div class="a td" style="right:295px;top:422.25px;color:#3fe03a">+0.190</div>
<div class="a td" style="right:249px;top:422.25px;color:#3fe03a">1</div>
<div class="a td" style="right:191px;top:422.25px;color:#f0e448">24294</div>
<div class="a td" style="right:130px;top:422.25px;color:#3fe03a">0.5697</div>
<div class="a td" style="right:88px;top:422.25px;color:#3fe03a">0.585</div>
<div class="a td" style="right:27px;top:422.25px;color:#3fe03a">+50.000%</div>
<div class="a td" style="left:871px;top:422.25px;color:#f2f2f2">Acti</div>
<div class="a td" style="left:8px;top:437.70px;color:#3ee6ee">06512X</div>
<div class="a td" style="left:61px;top:437.70px;color:#3ee6ee;letter-spacing:-0.25px">HSI-H2X</div>
<div class="a td" style="right:688px;top:437.70px;color:#f2f2f2">0.480</div>
<div class="a td" style="right:640px;top:437.70px;color:#3fe03a">0.665</div>
<div class="a td" style="right:592px;top:437.70px;color:#3fe03a">0.665</div>
<div class="a td" style="right:540px;top:437.70px;color:#f0e448">0</div>
<div class="a td" style="right:492px;top:437.70px;color:#3fe03a">-</div>
<div class="a td" style="right:444px;top:437.70px;color:#3fe03a">-</div>
<div class="a td" style="right:393px;top:437.70px;color:#f0e448">0</div>
<div class="a td" style="right:344px;top:437.70px;color:#3fe03a">0.665</div>
<div class="a td" style="right:295px;top:437.70px;color:#3fe03a">+0.185</div>
<div class="a td" style="right:249px;top:437.70px;color:#3fe03a">150</div>
<div class="a td" style="right:191px;top:437.70px;color:#f0e448">150</div>
<div class="a td" style="right:130px;top:437.70px;color:#3fe03a">0.6650</div>
<div class="a td" style="right:88px;top:437.70px;color:#3fe03a">-</div>
<div class="a td" style="right:27px;top:437.70px;color:#3fe03a">+38.542%</div>
<div class="a td" style="left:871px;top:437.70px;color:#f2f2f2">Acti</div>
<div class="a td" style="left:8px;top:453.15px;color:#3ee6ee">06514B</div>
<div class="a td" style="left:61px;top:453.15px;color:#3ee6ee;letter-spacing:-0.25px">HSI-H4B</div>
<div class="a td" style="right:688px;top:453.15px;color:#f2f2f2">0.730</div>
<div class="a td" style="right:640px;top:453.15px;color:#3fe03a">0.970</div>
<div class="a td" style="right:592px;top:453.15px;color:#3fe03a">0.865</div>
<div class="a td" style="right:540px;top:453.15px;color:#f0e448">100</div>
<div class="a td" style="right:492px;top:453.15px;color:#3fe03a">0.895</div>
<div class="a td" style="right:444px;top:453.15px;color:#3fe03a">-</div>
<div class="a td" style="right:393px;top:453.15px;color:#f0e448">0</div>
<div class="a td" style="right:344px;top:453.15px;color:#3fe03a">0.915</div>
<div class="a td" style="right:295px;top:453.15px;color:#3fe03a">+0.185</div>
<div class="a td" style="right:249px;top:453.15px;color:#3fe03a">350</div>
<div class="a td" style="right:191px;top:453.15px;color:#f0e448">26952</div>
<div class="a td" style="right:130px;top:453.15px;color:#3fe03a">0.9096</div>
<div class="a td" style="right:88px;top:453.15px;color:#3fe03a">-</div>
<div class="a td" style="right:27px;top:453.15px;color:#3fe03a">+25.342%</div>
<div class="a td" style="left:871px;top:453.15px;color:#f2f2f2">Acti</div>
<div class="a td" style="left:8px;top:468.60px;color:#3ee6ee">0703H8</div>
<div class="a td" style="left:61px;top:468.60px;color:#3ee6ee;letter-spacing:-0.25px">A50CHIN-H8</div>
<div class="a td" style="right:688px;top:468.60px;color:#f2f2f2">0.460</div>
<div class="a td" style="right:640px;top:468.60px;color:#3fe03a">0.640</div>
<div class="a td" style="right:592px;top:468.60px;color:#3fe03a">0.570</div>
<div class="a td" style="right:540px;top:468.60px;color:#f0e448">0</div>
<div class="a td" style="right:492px;top:468.60px;color:#3fe03a">-</div>
<div class="a td" style="right:444px;top:468.60px;color:#3fe03a">-</div>
<div class="a td" style="right:393px;top:468.60px;color:#f0e448">0</div>
<div class="a td" style="right:344px;top:468.60px;color:#3fe03a">0.640</div>
<div class="a td" style="right:295px;top:468.60px;color:#3fe03a">+0.180</div>
<div class="a td" style="right:249px;top:468.60px;color:#f24848">1000</div>
<div class="a td" style="right:191px;top:468.60px;color:#f0e448">9500</div>
<div class="a td" style="right:130px;top:468.60px;color:#3fe03a">0.5792</div>
<div class="a td" style="right:88px;top:468.60px;color:#3fe03a">-</div>
<div class="a td" style="right:27px;top:468.60px;color:#3fe03a">+39.130%</div>
<div class="a td" style="left:871px;top:468.60px;color:#f2f2f2">Acti</div>
<div class="a td" style="left:8px;top:484.05px;color:#3ee6ee">06512Z</div>
<div class="a td" style="left:61px;top:484.05px;color:#3ee6ee;letter-spacing:-0.25px">HSI-H2Z</div>
<div class="a td" style="right:688px;top:484.05px;color:#f2f2f2">0.565</div>
<div class="a td" style="right:640px;top:484.05px;color:#3fe03a">0.865</div>
<div class="a td" style="right:592px;top:484.05px;color:#3fe03a">0.680</div>
<div class="a td" style="right:540px;top:484.05px;color:#f0e448">20</div>
<div class="a td" style="right:492px;top:484.05px;color:#3fe03a">0.730</div>
<div class="a td" style="right:444px;top:484.05px;color:#3fe03a">0.730</div>
<div class="a td" style="right:393px;top:484.05px;color:#f0e448">1000</div>
<div class="a td" style="right:344px;top:484.05px;color:#3fe03a">0.700</div>
<div class="a td" style="right:295px;top:484.05px;color:#3fe03a">+0.135</div>
<div class="a td" style="right:249px;top:484.05px;color:#f24848">100</div>
<div class="a td" style="right:191px;top:484.05px;color:#f0e448">117829</div>
<div class="a td" style="right:130px;top:484.05px;color:#3fe03a">0.7077</div>
<div class="a td" style="right:88px;top:484.05px;color:#3fe03a">0.730</div>
<div class="a td" style="right:27px;top:484.05px;color:#3fe03a">+23.894%</div>
<div class="a td" style="left:871px;top:484.05px;color:#f2f2f2">Acti</div>
<div class="a td" style="left:8px;top:499.50px;color:#3ee6ee">0656HB</div>
<div class="a td" style="left:61px;top:499.50px;color:#3ee6ee;letter-spacing:-0.25px">SP500-HB</div>
<div class="a td" style="right:688px;top:499.50px;color:#f2f2f2">0.650</div>
<div class="a td" style="right:640px;top:499.50px;color:#3fe03a">0.790</div>
<div class="a td" style="right:592px;top:499.50px;color:#3fe03a">0.755</div>
<div class="a td" style="right:540px;top:499.50px;color:#f0e448">74</div>
<div class="a td" style="right:492px;top:499.50px;color:#3fe03a">0.775</div>
<div class="a td" style="right:444px;top:499.50px;color:#3fe03a">-</div>
<div class="a td" style="right:393px;top:499.50px;color:#f0e448">0</div>
<div class="a td" style="right:344px;top:499.50px;color:#3fe03a">0.775</div>
<div class="a td" style="right:295px;top:499.50px;color:#3fe03a">+0.125</div>
<div class="a td" style="right:249px;top:499.50px;color:#ff30ff">200</div>
<div class="a td" style="right:191px;top:499.50px;color:#f0e448">1479</div>
<div class="a td" style="right:130px;top:499.50px;color:#3fe03a">0.7766</div>
<div class="a td" style="right:88px;top:499.50px;color:#3fe03a">-</div>
<div class="a td" style="right:27px;top:499.50px;color:#3fe03a">+19.231%</div>
<div class="a td" style="left:871px;top:499.50px;color:#f2f2f2">Acti</div></div><!--/TABLE-->
<!--CHROME-->
<!-- table vscroll -->
<div class="a" style="left:892px;top:261px;width:15px;height:247px;background:#f0f0f0;border-left:1px solid #e4e4e4"></div>
<div class="a" style="left:893px;top:262px;width:14px;height:15px;background:linear-gradient(90deg,#fafafa,#e8e8e8)"></div>
<div class="a" style="left:896px;top:267px;border-left:4px solid transparent;border-right:4px solid transparent;border-bottom:4px solid #333"></div>
<div class="a" style="left:893px;top:278px;width:13px;height:173px;background:linear-gradient(90deg,#f4f4f4,#e2e2e2 50%,#d4d4d4);border:1px solid #b8b8b8;border-radius:2px"></div>
<div class="a" style="left:897px;top:361px;width:6px;height:1px;background:#777"></div>
<div class="a" style="left:897px;top:363px;width:6px;height:1px;background:#777"></div>
<div class="a" style="left:897px;top:365px;width:6px;height:1px;background:#777"></div>
<!-- page vscroll -->
<div class="a" style="left:913px;top:0;width:16px;height:507px;background:#ececec;border-left:1px solid #d8d8d8"></div>
<div class="a" style="left:914px;top:0;width:15px;height:15px;background:linear-gradient(90deg,#fdfdfd,#ececec)"></div>
<div class="a" style="left:918.5px;top:6px;border-left:3.5px solid transparent;border-right:3.5px solid transparent;border-bottom:4px solid #333"></div>
<div class="a" style="left:915px;top:16px;width:13px;height:332px;background:linear-gradient(90deg,#f6f6f6,#e6e6e6 50%,#d6d6d6);border:1px solid #bcbcbc;border-radius:2px"></div>
<div class="a" style="left:918px;top:179px;width:7px;height:1px;background:#666"></div>
<div class="a" style="left:918px;top:181px;width:7px;height:1px;background:#666"></div>
<div class="a" style="left:918px;top:183px;width:7px;height:1px;background:#666"></div>
<div class="a" style="left:918.5px;top:498px;border-left:3.5px solid transparent;border-right:3.5px solid transparent;border-top:4px solid #333"></div>
<!-- hscroll -->
<div class="a" style="left:0;top:508px;width:913px;height:15px;background:#ededed;border-top:1px solid #dcdcdc"></div>
<div class="a" style="left:5px;top:512px;border-top:3px solid transparent;border-bottom:3px solid transparent;border-right:4px solid #444"></div>
<div class="a" style="left:16px;top:509px;width:797px;height:13px;background:linear-gradient(#f8f8f8,#e4e4e4 50%,#d2d2d2);border:1px solid #b4b4b4;border-radius:2px"></div>
<div class="a" style="left:412px;top:512px;width:1px;height:6px;background:#555"></div>
<div class="a" style="left:414px;top:512px;width:1px;height:6px;background:#555"></div>
<div class="a" style="left:416px;top:512px;width:1px;height:6px;background:#555"></div>
<div class="a" style="left:905px;top:512px;border-top:3px solid transparent;border-bottom:3px solid transparent;border-left:4px solid #444"></div>
<div class="a" style="left:913px;top:507px;width:16px;height:16px;background:#ececec"></div>
<!-- status bar -->
<div class="a" style="left:0;top:523px;width:929px;height:20px;background:#efebeb;border-top:1px solid #c8c8c8"></div>
<div class="a nw" style="left:2px;top:527px;font-size:11.6px;color:#1a1a2a;line-height:14px;letter-spacing:-0.5px">Done</div>
<div class="a sep2" style="left:421px"></div>
<div class="a sep2" style="left:443px"></div>
<div class="a sep2" style="left:465px"></div>
<div class="a sep2" style="left:487px"></div>
<div class="a sep2" style="left:509px"></div>
<div class="a sep2" style="left:531px"></div>
<div class="a sep2" style="left:552px"></div>
<svg class="a" style="left:556px;top:527px" width="14" height="14" viewBox="0 0 14 14"><defs><radialGradient id="gl" cx=".35" cy=".3" r=".75"><stop offset="0" stop-color="#8ad0ff"/><stop offset=".6" stop-color="#2a78d8"/><stop offset="1" stop-color="#143c90"/></radialGradient></defs><circle cx="7" cy="7" r="6.6" fill="url(#gl)"/><path d="M2.5 4Q4.5 2 7 3Q8 5 6 6Q5 8 3.5 9Q2 7 2.5 4Z M8 8Q10.5 7 12 9Q11 11.5 8.5 12Q8.5 10 8 8Z M9 2.5Q11 3 11.5 5Q10 5 9 2.5Z" fill="#3ab840"/></svg>
<div class="a nw" style="left:574px;top:527px;font-size:11.2px;color:#1a1a2a;line-height:14px;letter-spacing:-0.1px">Internet | Protected Mode: Off</div>
<div class="a sep2" style="left:797px"></div>
<svg class="a" style="left:805px;top:527px" width="15" height="14" viewBox="0 0 15 14"><path d="M6.5 11.5Q1 10 1.5 5.5Q2.5 1.5 7 1.5Q10.5 1.5 12 4.5" fill="none" stroke="#b0b0b8" stroke-width="1.6"/><path d="M0 6L1.5 3L4 6Z" fill="#b0b0b8"/><path d="M7.8 7.5V6Q7.8 4.2 9.8 4.2Q11.8 4.2 11.8 6V7.5" fill="none" stroke="#9a9aa0" stroke-width="1.2"/><rect x="6.8" y="7.5" width="6.2" height="5.5" fill="#9a9aa2"/></svg>
<div class="a" style="left:826px;top:532px;border-left:4px solid transparent;border-right:4px solid transparent;border-top:4px solid #333"></div>
<div class="a sep2" style="left:837px"></div>
<svg class="a" style="left:848px;top:527.5px" width="12" height="12" viewBox="0 0 12 12"><path d="M6.5 6.5L11 11" stroke="#8a6030" stroke-width="2.2"/><circle cx="4.6" cy="4.6" r="4" fill="#e8f0fa" stroke="#3a78d0" stroke-width="1.1"/><path d="M4.6 2.3v4.6M2.3 4.6h4.6" stroke="#1a58c0" stroke-width="1.4"/></svg>
<div class="a nw" style="left:861.5px;top:527px;font-size:11px;color:#1a1a2a;line-height:14px;letter-spacing:-0.2px">80%</div>
<div class="a" style="left:901px;top:532px;border-left:4px solid transparent;border-right:4px solid transparent;border-top:4px solid #222"></div>
<svg class="a" style="left:917px;top:534px" width="11" height="9" viewBox="0 0 11 9"><g fill="#c0c0c0"><rect x="8" y="0" width="1.5" height="1.5"/><rect x="5" y="3" width="1.5" height="1.5"/><rect x="8" y="3" width="1.5" height="1.5"/><rect x="2" y="6" width="1.5" height="1.5"/><rect x="5" y="6" width="1.5" height="1.5"/><rect x="8" y="6" width="1.5" height="1.5"/></g></svg>
<!--/CHROME-->
</body></html>
